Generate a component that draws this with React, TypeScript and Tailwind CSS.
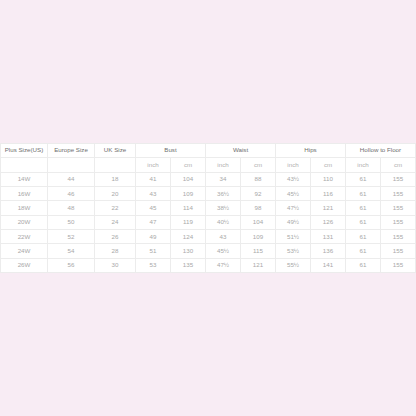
import React from 'react';

const rows = [
  ['14W', '44', '18', '41', '104', '34', '88', '43½', '110', '61', '155'],
  ['16W', '46', '20', '43', '109', '36½', '92', '45½', '116', '61', '155'],
  ['18W', '48', '22', '45', '114', '38½', '98', '47½', '121', '61', '155'],
  ['20W', '50', '24', '47', '119', '40½', '104', '49½', '126', '61', '155'],
  ['22W', '52', '26', '49', '124', '43', '109', '51½', '131', '61', '155'],
  ['24W', '54', '28', '51', '130', '45½', '115', '53½', '136', '61', '155'],
  ['26W', '56', '30', '53', '135', '47½', '121', '55½', '141', '61', '155'],
];

const groups = ['Bust', 'Waist', 'Hips', 'Hollow to Floor'];

export default function App() {
  return (
    <div
      className="min-h-screen w-[416px] flex items-center bg-[#f8ecf4]"
      style={{ fontFamily: '"Liberation Sans", Arial, sans-serif' }}
    >
      <table className="w-full table-fixed border-collapse bg-white text-center text-[6.2px] leading-none">
        <colgroup>
          <col className="w-[47px]" />
          <col className="w-[47px]" />
          <col className="w-[41px]" />
          {Array.from({ length: 8 }).map((_, i) => (
            <col key={i} />
          ))}
        </colgroup>
        <thead>
          <tr className="h-[14.4px] text-[#6f6f6f]">
            <th className="border border-[#ececec] font-normal">Plus Size(US)</th>
            <th className="border border-[#ececec] font-normal">Europe Size</th>
            <th className="border border-[#ececec] font-normal">UK Size</th>
            {groups.map((g) => (
              <th key={g} colSpan={2} className="border border-[#ececec] font-normal">
                {g}
              </th>
            ))}
          </tr>
          <tr className="h-[14.4px] text-[#b0b0b0]">
            <th className="border border-[#ececec] font-normal"></th>
            <th className="border border-[#ececec] font-normal"></th>
            <th className="border border-[#ececec] font-normal"></th>
            {groups.map((g) => (
              <React.Fragment key={g}>
                <th className="border border-[#ececec] font-normal">inch</th>
                <th className="border border-[#ececec] font-normal">cm</th>
              </React.Fragment>
            ))}
          </tr>
        </thead>
        <tbody>
          {rows.map((r) => (
            <tr key={r[0]} className="h-[14.4px] text-[#a8a8a8]">
              {r.map((c, i) => (
                <td key={i} className="border border-[#ececec]">
                  {c}
                </td>
              ))}
            </tr>
          ))}
        </tbody>
      </table>
    </div>
  );
}
